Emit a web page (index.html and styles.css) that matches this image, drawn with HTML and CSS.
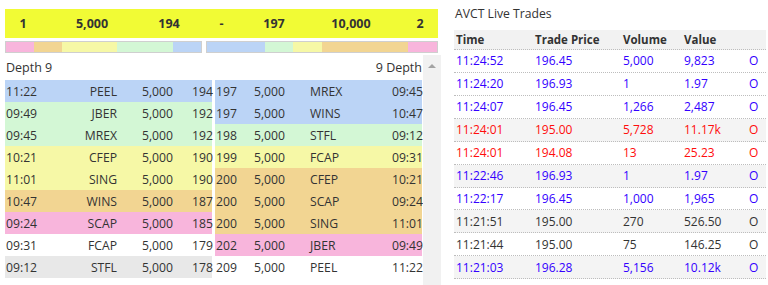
FILE: index.html
```html
<!DOCTYPE html>
<html>
<head>
<meta charset="utf-8">
<link rel="stylesheet" href="styles.css">
</head>
<body>
<div class="page">
  <section class="depth-panel">
    <div class="summary">
      <span>1</span><span>5,000</span><span>194</span><span>-</span><span>197</span><span>10,000</span><span>2</span>
    </div>
    <div class="bars">
      <div class="bar bar-bid">
        <i class="seg pink" style="flex-grow:1"></i>
        <i class="seg orange" style="flex-grow:1"></i>
        <i class="seg yellow" style="flex-grow:2"></i>
        <i class="seg green" style="flex-grow:2"></i>
        <i class="seg blue" style="flex-grow:1"></i>
      </div>
      <div class="bar bar-ask">
        <i class="seg blue" style="flex-grow:2"></i>
        <i class="seg green" style="flex-grow:1"></i>
        <i class="seg yellow" style="flex-grow:1"></i>
        <i class="seg orange" style="flex-grow:3"></i>
        <i class="seg pink" style="flex-grow:1"></i>
      </div>
    </div>
    <div class="book">
      <div class="book-main">
        <div class="book-head"><span>Depth 9</span><span>9 Depth</span></div>
        <div class="book-rows">
          <div class="side bids">
            <div class="row blue"><span>11:22</span><span class="r">PEEL</span><span class="r">5,000</span><span class="r">194</span></div>
            <div class="row green"><span>09:49</span><span class="r">JBER</span><span class="r">5,000</span><span class="r">192</span></div>
            <div class="row green"><span>09:45</span><span class="r">MREX</span><span class="r">5,000</span><span class="r">192</span></div>
            <div class="row yellow"><span>10:21</span><span class="r">CFEP</span><span class="r">5,000</span><span class="r">190</span></div>
            <div class="row yellow"><span>11:01</span><span class="r">SING</span><span class="r">5,000</span><span class="r">190</span></div>
            <div class="row orange"><span>10:47</span><span class="r">WINS</span><span class="r">5,000</span><span class="r">187</span></div>
            <div class="row pink"><span>09:24</span><span class="r">SCAP</span><span class="r">5,000</span><span class="r">185</span></div>
            <div class="row white"><span>09:31</span><span class="r">FCAP</span><span class="r">5,000</span><span class="r">179</span></div>
            <div class="row gray"><span>09:12</span><span class="r">STFL</span><span class="r">5,000</span><span class="r">178</span></div>
          </div>
          <div class="side asks">
            <div class="row blue"><span>197</span><span>5,000</span><span>MREX</span><span class="r">09:45</span></div>
            <div class="row blue"><span>197</span><span>5,000</span><span>WINS</span><span class="r">10:47</span></div>
            <div class="row green"><span>198</span><span>5,000</span><span>STFL</span><span class="r">09:12</span></div>
            <div class="row yellow"><span>199</span><span>5,000</span><span>FCAP</span><span class="r">09:31</span></div>
            <div class="row orange"><span>200</span><span>5,000</span><span>CFEP</span><span class="r">10:21</span></div>
            <div class="row orange"><span>200</span><span>5,000</span><span>SCAP</span><span class="r">09:24</span></div>
            <div class="row orange"><span>200</span><span>5,000</span><span>SING</span><span class="r">11:01</span></div>
            <div class="row pink"><span>202</span><span>5,000</span><span>JBER</span><span class="r">09:49</span></div>
            <div class="row white"><span>209</span><span>5,000</span><span>PEEL</span><span class="r">11:22</span></div>
          </div>
        </div>
      </div>
      <div class="scrollbar"><span class="arrow"></span></div>
    </div>
  </section>
  <section class="trades-panel">
    <h2 class="title">AVCT Live Trades</h2>
    <div class="trades">
      <div class="trow head"><span>Time</span><span>Trade Price</span><span>Volume</span><span>Value</span><span></span></div>
      <div class="trow buy"><span>11:24:52</span><span>196.45</span><span>5,000</span><span>9,823</span><span>O</span></div>
      <div class="trow buy"><span>11:24:20</span><span>196.93</span><span>1</span><span>1.97</span><span>O</span></div>
      <div class="trow buy"><span>11:24:07</span><span>196.45</span><span>1,266</span><span>2,487</span><span>O</span></div>
      <div class="trow sell alt"><span>11:24:01</span><span>195.00</span><span>5,728</span><span>11.17k</span><span>O</span></div>
      <div class="trow sell"><span>11:24:01</span><span>194.08</span><span>13</span><span>25.23</span><span>O</span></div>
      <div class="trow buy alt"><span>11:22:46</span><span>196.93</span><span>1</span><span>1.97</span><span>O</span></div>
      <div class="trow buy"><span>11:22:17</span><span>196.45</span><span>1,000</span><span>1,965</span><span>O</span></div>
      <div class="trow mid alt"><span>11:21:51</span><span>195.00</span><span>270</span><span>526.50</span><span>O</span></div>
      <div class="trow mid"><span>11:21:44</span><span>195.00</span><span>75</span><span>146.25</span><span>O</span></div>
      <div class="trow buy alt"><span>11:21:03</span><span>196.28</span><span>5,156</span><span>10.12k</span><span>O</span></div>
    </div>
  </section>
</div>
</body>
</html>
```
FILE: styles.css
```css
* { box-sizing: border-box; }
html, body { margin: 0; padding: 0; background: #fff; }
body {
  font-family: "Open Sans", "Noto Sans", sans-serif;
  font-size: 12px;
  color: #333;
  height: 285px;
  overflow: hidden;
}
.page {
  display: flex;
  align-items: flex-start;
  padding-left: 5px;
}
.depth-panel {
  width: 436px;
  padding-top: 9px;
  display: flex;
  flex-direction: column;
}
.summary {
  width: 433px;
  height: 29px;
  background: #f1fb35;
  display: grid;
  grid-template-columns: 36px 102px 52px 53px 52px 102px 36px;
  align-items: center;
  font-weight: 700;
  font-size: 12.5px;
}
.summary span { text-align: center; }
.bars {
  display: flex;
  gap: 4px;
  margin-top: 3px;
  width: 433px;
}
.bar {
  height: 12px;
  border: 1px solid #cfcfcf;
  display: flex;
}
.bar-bid { width: 197px; }
.bar-ask { width: 232px; }
.seg { display: block; flex-basis: 0; height: 100%; }
.blue { background: #bbd4f6; }
.green { background: #d3f7d5; }
.yellow { background: #f6f8a6; }
.orange { background: #f2d592; }
.pink { background: #f8b5dc; }
.white { background: #fff; }
.gray { background: #e8e8e8; }
.book {
  display: flex;
  gap: 1px;
  margin-top: 2px;
  height: 230px;
}
.book-main { width: 417px; }
.book-head {
  height: 25px;
  display: flex;
  justify-content: space-between;
  align-items: center;
  padding: 0 0 0 1px;
  font-size: 12.5px;
}
.book-rows {
  display: flex;
  gap: 3px;
}
.side { width: 207px; }
.row {
  height: 22px;
  display: grid;
  align-items: center;
  font-size: 12.2px;
  white-space: nowrap;
}
.bids .row {
  grid-template-columns: 61px 50px 56px 40px;
  padding-left: 1px;
  padding-right: 1px;
}
.asks .row {
  grid-template-columns: 38px 56px 61px 52px;
  padding-left: 1px;
  padding-right: 2px;
}
.row .r { text-align: right; }
.scrollbar {
  width: 18px;
  background: #f1f1f1;
  position: relative;
}
.arrow {
  position: absolute;
  left: 5px;
  top: 9px;
  width: 0;
  height: 0;
  border-left: 4px solid transparent;
  border-right: 4px solid transparent;
  border-bottom: 4px solid #a3a3a3;
}
.trades-panel {
  margin-left: 13px;
  width: 312px;
  padding-top: 5px;
}
.title {
  margin: 0 0 7px 1px;
  font-size: 12.2px;
  font-weight: 400;
  line-height: 18px;
}
.trow {
  display: grid;
  grid-template-columns: 79px 88px 61px 65px 19px;
  height: 22.93px;
  align-items: center;
  border-bottom: 1px dotted #bdbdbd;
  font-size: 12px;
  white-space: nowrap;
}
.trow span { padding-left: 2px; }
.trow.head {
  height: 20px;
  background: #f2f2f2;
  font-weight: 700;
  font-size: 11.5px;
  color: #333;
}
.trow.alt { background: #f4f4f4; }
.buy { color: #3300ff; }
.sell { color: #ff0d0d; }
.mid { color: #333; }
```
